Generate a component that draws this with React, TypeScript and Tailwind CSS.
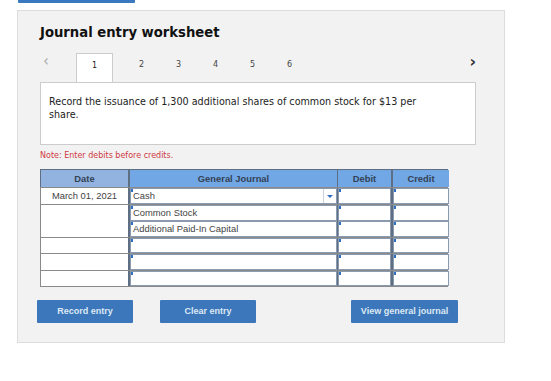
import React from "react"

const rows = [
  { date: "March 01, 2021", account: "Cash", dropdown: true },
  { date: "", account: "Common Stock" },
  { date: "", account: "Additional Paid-In Capital" },
  { date: "", account: "" },
  { date: "", account: "" },
  { date: "", account: "" },
]

function Marker() {
  return <span className="absolute left-0 top-0 w-[2px] h-[3px] bg-[#2f6fc4]" />
}

function Cell({ text, dropdown }: { text?: string; dropdown?: boolean }) {
  return (
    <div className="relative h-full border border-[#8a9bb0] bg-white flex items-center">
      <Marker />
      <span className="pl-[2px] text-[9.4px] text-[#444]">{text}</span>
      {dropdown && (
        <span className="ml-auto h-full flex items-center border-l border-[#c9d3df] px-[3px]">
          <span className="block w-0 h-0 border-l-[3px] border-r-[3px] border-t-[3px] border-l-transparent border-r-transparent border-t-[#2f6fc4]" />
        </span>
      )}
    </div>
  )
}

export default function App() {
  return (
    <div className="w-[551px] h-[381px] bg-white relative" style={{ fontFamily: "'DejaVu Sans', Verdana, sans-serif" }}>
      <div className="absolute left-[18px] top-0 w-[117px] h-[3px] bg-[#3a78c0] rounded-b-[1px]" />
      <div className="pt-[10px] pl-[17px]">
        <div className="w-[488px] h-[333px] bg-[#f2f2f2] border border-[#dddddd] px-[22px] pt-[15px]">
          <h1 className="text-[13.2px] font-bold text-[#111] leading-none">Journal entry worksheet</h1>

          <div className="mt-[14px] flex items-start h-[29px] relative">
            <span className="w-[36px] text-[#aaa] text-[15px] leading-none pt-[1px] pl-[3px]">‹</span>
            <div className="w-[37px] h-[29px] bg-white border border-[#cccccc] border-b-0 flex justify-center pt-[6px] text-[8px] text-[#222] relative z-10 -mb-px">1</div>
            <div className="w-[10px]" />
            {["2", "3", "4", "5", "6"].map((n) => (
              <div key={n} className="w-[37px] h-[29px] flex justify-center pt-[6px] text-[8px] text-[#444]">{n}</div>
            ))}
            <span className="ml-auto mr-[6px] pt-[1px] text-[16px] font-bold text-[#333] leading-none">›</span>
          </div>

          <div className="w-[436px] h-[63px] bg-white border border-[#cccccc] px-[8px] pt-[12px]">
            <p className="w-[380px] text-[9.6px] leading-[13px] text-[#222]">
              Record the issuance of 1,300 additional shares of common stock for $13 per share.
            </p>
          </div>

          <p className="mt-[7px] text-[8px] text-[#d0393f] leading-none">Note: Enter debits before credits.</p>

          <div className="mt-[9px] w-[408px]" style={{ fontFamily: "'Liberation Sans', Arial, sans-serif" }}>
            <div className="grid grid-cols-[89px_208px_55px_56px] h-[18px] border-t border-x border-[#5e6f84] text-[9.4px] font-bold text-[#344255]">
              <div className="bg-[#92b2e0] flex items-center justify-center border-r-2 border-[#5e6f84]">Date</div>
              <div className="bg-[#70a7e4] flex items-center justify-center border-r border-[#5e6f84]">General Journal</div>
              <div className="bg-[#70a7e4] flex items-center justify-center border-r-2 border-[#5e6f84]">Debit</div>
              <div className="bg-[#70a7e4] flex items-center justify-center">Credit</div>
            </div>
            <div className="border-x border-b border-[#8a8a8a]">
              {rows.map((r, i) => (
                <div key={i} className="grid grid-cols-[89px_208px_55px_56px] h-[16.5px] border-t border-[#8a8a8a]">
                  <div className="bg-white flex items-center justify-center text-[9.4px] text-[#444] border-r-2 border-[#5e6f84]">{r.date}</div>
                  <div className="border-r border-[#5e6f84]"><Cell text={r.account} dropdown={r.dropdown} /></div>
                  <div className="border-r-2 border-[#5e6f84]"><Cell /></div>
                  <div><Cell /></div>
                </div>
              ))}
            </div>
          </div>

          <div className="mt-[13px] flex items-center text-[9px] font-bold text-[#dde8f5]" style={{ fontFamily: "'Liberation Sans', Arial, sans-serif" }}>
            <button className="w-[96px] h-[23px] bg-[#3b77ba] rounded-[1px] -ml-[3px]">Record entry</button>
            <button className="ml-[27px] w-[96px] h-[23px] bg-[#3b77ba] rounded-[1px]">Clear entry</button>
            <button className="ml-[95px] w-[107px] h-[23px] bg-[#3b77ba] rounded-[1px]">View general journal</button>
          </div>
        </div>
      </div>
    </div>
  )
}
